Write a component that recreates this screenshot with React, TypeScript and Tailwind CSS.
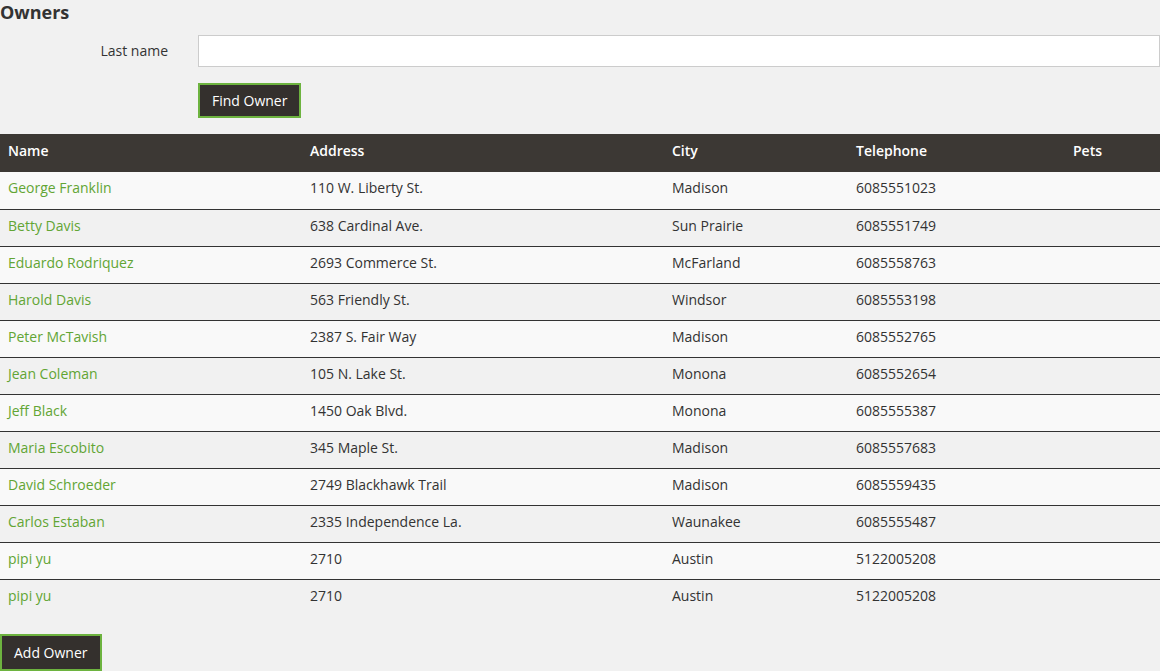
const owners = [
  { name: 'George Franklin', address: '110 W. Liberty St.', city: 'Madison', telephone: '6085551023' },
  { name: 'Betty Davis', address: '638 Cardinal Ave.', city: 'Sun Prairie', telephone: '6085551749' },
  { name: 'Eduardo Rodriquez', address: '2693 Commerce St.', city: 'McFarland', telephone: '6085558763' },
  { name: 'Harold Davis', address: '563 Friendly St.', city: 'Windsor', telephone: '6085553198' },
  { name: 'Peter McTavish', address: '2387 S. Fair Way', city: 'Madison', telephone: '6085552765' },
  { name: 'Jean Coleman', address: '105 N. Lake St.', city: 'Monona', telephone: '6085552654' },
  { name: 'Jeff Black', address: '1450 Oak Blvd.', city: 'Monona', telephone: '6085555387' },
  { name: 'Maria Escobito', address: '345 Maple St.', city: 'Madison', telephone: '6085557683' },
  { name: 'David Schroeder', address: '2749 Blackhawk Trail', city: 'Madison', telephone: '6085559435' },
  { name: 'Carlos Estaban', address: '2335 Independence La.', city: 'Waunakee', telephone: '6085555487' },
  { name: 'pipi yu', address: '2710', city: 'Austin', telephone: '5122005208' },
  { name: 'pipi yu', address: '2710', city: 'Austin', telephone: '5122005208' },
];

export default function App() {
  return (
    <div
      className="min-h-[671px] w-[1160px] bg-[#f1f1f1] text-[14px] text-[#333]"
      style={{ fontFamily: '"Open Sans", "Liberation Sans", sans-serif' }}
    >
      <h2 className="m-0 h-[24px] text-[18px] font-bold leading-[24px] text-[#333]">Owners</h2>

      <form className="mt-[11px]">
        <div className="flex items-center">
          <label className="w-[168px] text-right text-[14px] leading-[20px]">Last name</label>
          <input
            type="text"
            className="ml-[30px] h-[32px] flex-1 border border-[#ccc] bg-white px-3 outline-none"
          />
        </div>
        <div className="mt-[16px] pl-[198px]">
          <button
            type="button"
            className="h-[35px] border-2 border-[#6db33f] bg-[#34302d] px-[12px] text-[14px] leading-[20px] text-white"
          >
            Find Owner
          </button>
        </div>
      </form>

      <table className="mt-[16px] w-full border-collapse">
        <thead>
          <tr className="h-[38px] bg-[#3c3834] text-left text-white">
            <th className="w-[302px] px-2 pt-[7px] align-top font-semibold leading-[20px]">Name</th>
            <th className="w-[362px] px-2 pt-[7px] align-top font-semibold leading-[20px]">Address</th>
            <th className="w-[184px] px-2 pt-[7px] align-top font-semibold leading-[20px]">City</th>
            <th className="w-[217px] px-2 pt-[7px] align-top font-semibold leading-[20px]">Telephone</th>
            <th className="px-2 pt-[7px] align-top font-semibold leading-[20px]">Pets</th>
          </tr>
        </thead>
        <tbody>
          {owners.map((o, i) => (
            <tr
              key={i}
              className={
                'h-[37px] ' +
                (i % 2 === 0 ? 'bg-[#f9f9f9]' : 'bg-[#f1f1f1]') +
                (i > 0 ? ' border-t border-[#333]' : '')
              }
            >
              <td className="px-2 pt-[6px] align-top leading-[20px]">
                <a href="#" className="text-[#62a534]">
                  {o.name}
                </a>
              </td>
              <td className="px-2 pt-[6px] align-top leading-[20px]">{o.address}</td>
              <td className="px-2 pt-[6px] align-top leading-[20px]">{o.city}</td>
              <td className="px-2 pt-[6px] align-top leading-[20px]">{o.telephone}</td>
              <td className="px-2 pt-[6px] align-top leading-[20px]"></td>
            </tr>
          ))}
        </tbody>
      </table>

      <div className="mt-[18px]">
        <button
          type="button"
          className="h-[37px] border-2 border-[#6db33f] bg-[#34302d] px-[12px] text-[14px] leading-[20px] text-white"
        >
          Add Owner
        </button>
      </div>
    </div>
  );
}
